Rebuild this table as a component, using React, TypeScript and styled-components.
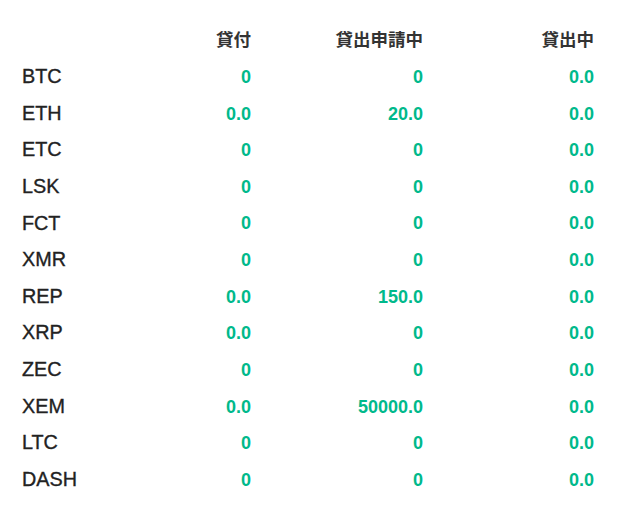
import React from "react";
import styled, { createGlobalStyle } from "styled-components";

const Global = createGlobalStyle`
  html, body { margin: 0; padding: 0; background: #ffffff; }
  body { font-family: "Liberation Sans", Arial, "Noto Sans CJK JP", sans-serif; }
`;

const Wrap = styled.div`
  padding: 22px 0 0 22px;
`;

const Grid = styled.div`
  display: grid;
  grid-template-columns: 57px 172px 172px 171px;
  grid-auto-rows: 36.64px;
  align-items: center;
  width: 572px;
`;

const Head = styled.div<{ $align?: "left" | "right" }>`
  text-align: ${(p) => p.$align ?? "right"};
  font-family: "Liberation Sans", "Noto Sans CJK JP", sans-serif;
  font-size: 17.5px;
  font-weight: 700;
  color: #333333;
  line-height: 1;
`;

const Label = styled.div`
  font-size: 19.8px;
  color: #222222;
  -webkit-text-stroke: 0.35px #222222;
  line-height: 1;
`;

const Value = styled.div`
  text-align: right;
  font-size: 18px;
  font-weight: 700;
  color: #00b98b;
  line-height: 1;
`;

const rows: [string, string, string, string][] = [
  ["BTC", "0", "0", "0.0"],
  ["ETH", "0.0", "20.0", "0.0"],
  ["ETC", "0", "0", "0.0"],
  ["LSK", "0", "0", "0.0"],
  ["FCT", "0", "0", "0.0"],
  ["XMR", "0", "0", "0.0"],
  ["REP", "0.0", "150.0", "0.0"],
  ["XRP", "0.0", "0", "0.0"],
  ["ZEC", "0", "0", "0.0"],
  ["XEM", "0.0", "50000.0", "0.0"],
  ["LTC", "0", "0", "0.0"],
  ["DASH", "0", "0", "0.0"],
];

export default function App() {
  return (
    <>
      <Global />
      <Wrap>
        <Grid>
          <Head $align="left"></Head>
          <Head>貸付</Head>
          <Head>貸出申請中</Head>
          <Head>貸出中</Head>
          {rows.map((r) => (
            <React.Fragment key={r[0]}>
              <Label>{r[0]}</Label>
              <Value>{r[1]}</Value>
              <Value>{r[2]}</Value>
              <Value>{r[3]}</Value>
            </React.Fragment>
          ))}
        </Grid>
      </Wrap>
    </>
  );
}
